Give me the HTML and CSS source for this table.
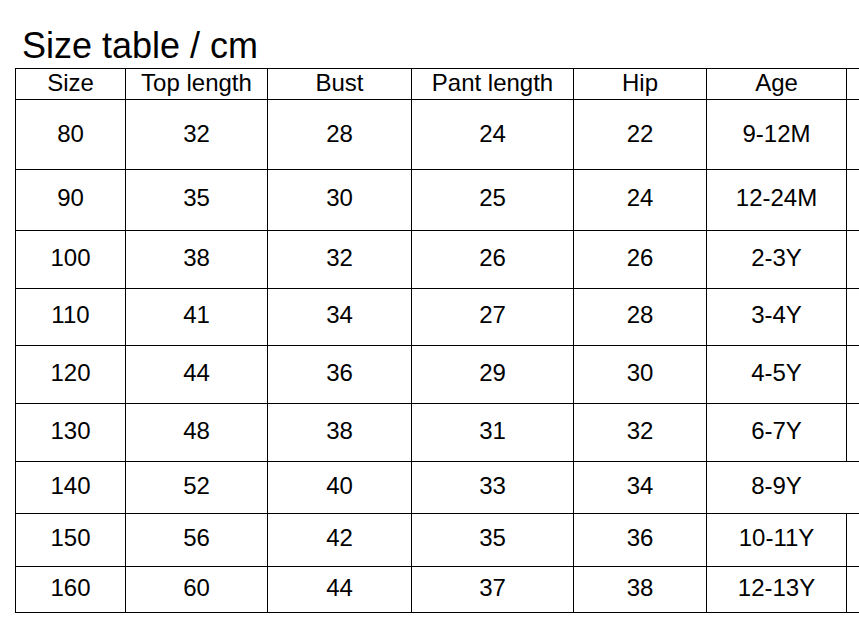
FILE: index.html
```html
<!DOCTYPE html>
<html>
<head>
<meta charset="utf-8">
<link rel="stylesheet" href="styles.css">
</head>
<body>
<h1 class="title">Size table / cm</h1>
<table class="sizes">
  <colgroup>
    <col class="c1"><col class="c2"><col class="c3"><col class="c4"><col class="c5"><col class="c6"><col class="c7">
  </colgroup>
  <tr class="r0"><td>Size</td><td>Top length</td><td>Bust</td><td>Pant length</td><td>Hip</td><td>Age</td><td></td></tr>
  <tr class="r1"><td>80</td><td>32</td><td>28</td><td>24</td><td>22</td><td>9-12M</td><td></td></tr>
  <tr class="r2"><td>90</td><td>35</td><td>30</td><td>25</td><td>24</td><td>12-24M</td><td></td></tr>
  <tr class="r3"><td>100</td><td>38</td><td>32</td><td>26</td><td>26</td><td>2-3Y</td><td></td></tr>
  <tr class="r4"><td>110</td><td>41</td><td>34</td><td>27</td><td>28</td><td>3-4Y</td><td></td></tr>
  <tr class="r5"><td>120</td><td>44</td><td>36</td><td>29</td><td>30</td><td>4-5Y</td><td></td></tr>
  <tr class="r6"><td>130</td><td>48</td><td>38</td><td>31</td><td>32</td><td>6-7Y</td><td></td></tr>
  <tr class="r7"><td>140</td><td>52</td><td>40</td><td>33</td><td>34</td><td class="open-right">8-9Y</td><td class="open-left"></td></tr>
  <tr class="r8"><td>150</td><td>56</td><td>42</td><td>35</td><td>36</td><td>10-11Y</td><td></td></tr>
  <tr class="r9 last"><td>160</td><td>60</td><td>44</td><td>37</td><td>38</td><td>12-13Y</td><td></td></tr>
</table>
</body>
</html>
```
FILE: styles.css
```css
html, body {
  margin: 0;
  padding: 0;
  overflow: hidden;
  background: #fff;
  width: 859px;
  height: 618px;
}
body {
  font-family: "Liberation Sans", Arial, sans-serif;
  color: #000;
}
.title {
  margin: 0 0 4px 22px;
  padding-top: 28px;
  font-size: 36px;
  line-height: 36px;
  font-weight: normal;
}
.sizes {
  margin-left: 15px;
  border-collapse: separate;
  border-spacing: 0;
  table-layout: fixed;
  width: 844px;
  font-size: 24px;
}
.c1 { width: 110px; }
.c2 { width: 142px; }
.c3 { width: 144px; }
.c4 { width: 162px; }
.c5 { width: 133px; }
.c6 { width: 140px; }
.c7 { width: 13px; }
.sizes td {
  border-left: 1px solid #000;
  border-top: 1px solid #000;
  padding: 0 0 4px 0;
  text-align: center;
  vertical-align: middle;
  box-sizing: border-box;
}
.sizes .r0 td { padding-bottom: 2px; }
.sizes .r1 td { padding-bottom: 2px; }
.sizes td.open-left { border-left: none; }
.sizes tr.last td { border-bottom: 1px solid #000; }
.r0 { height: 30px; }
.r1 { height: 70px; }
.r2 { height: 61px; }
.r3 { height: 58px; }
.r4 { height: 57px; }
.r5 { height: 58px; }
.r6 { height: 58px; }
.r7 { height: 52px; }
.r8 { height: 53px; }
.r9 { height: 47px; }
```
